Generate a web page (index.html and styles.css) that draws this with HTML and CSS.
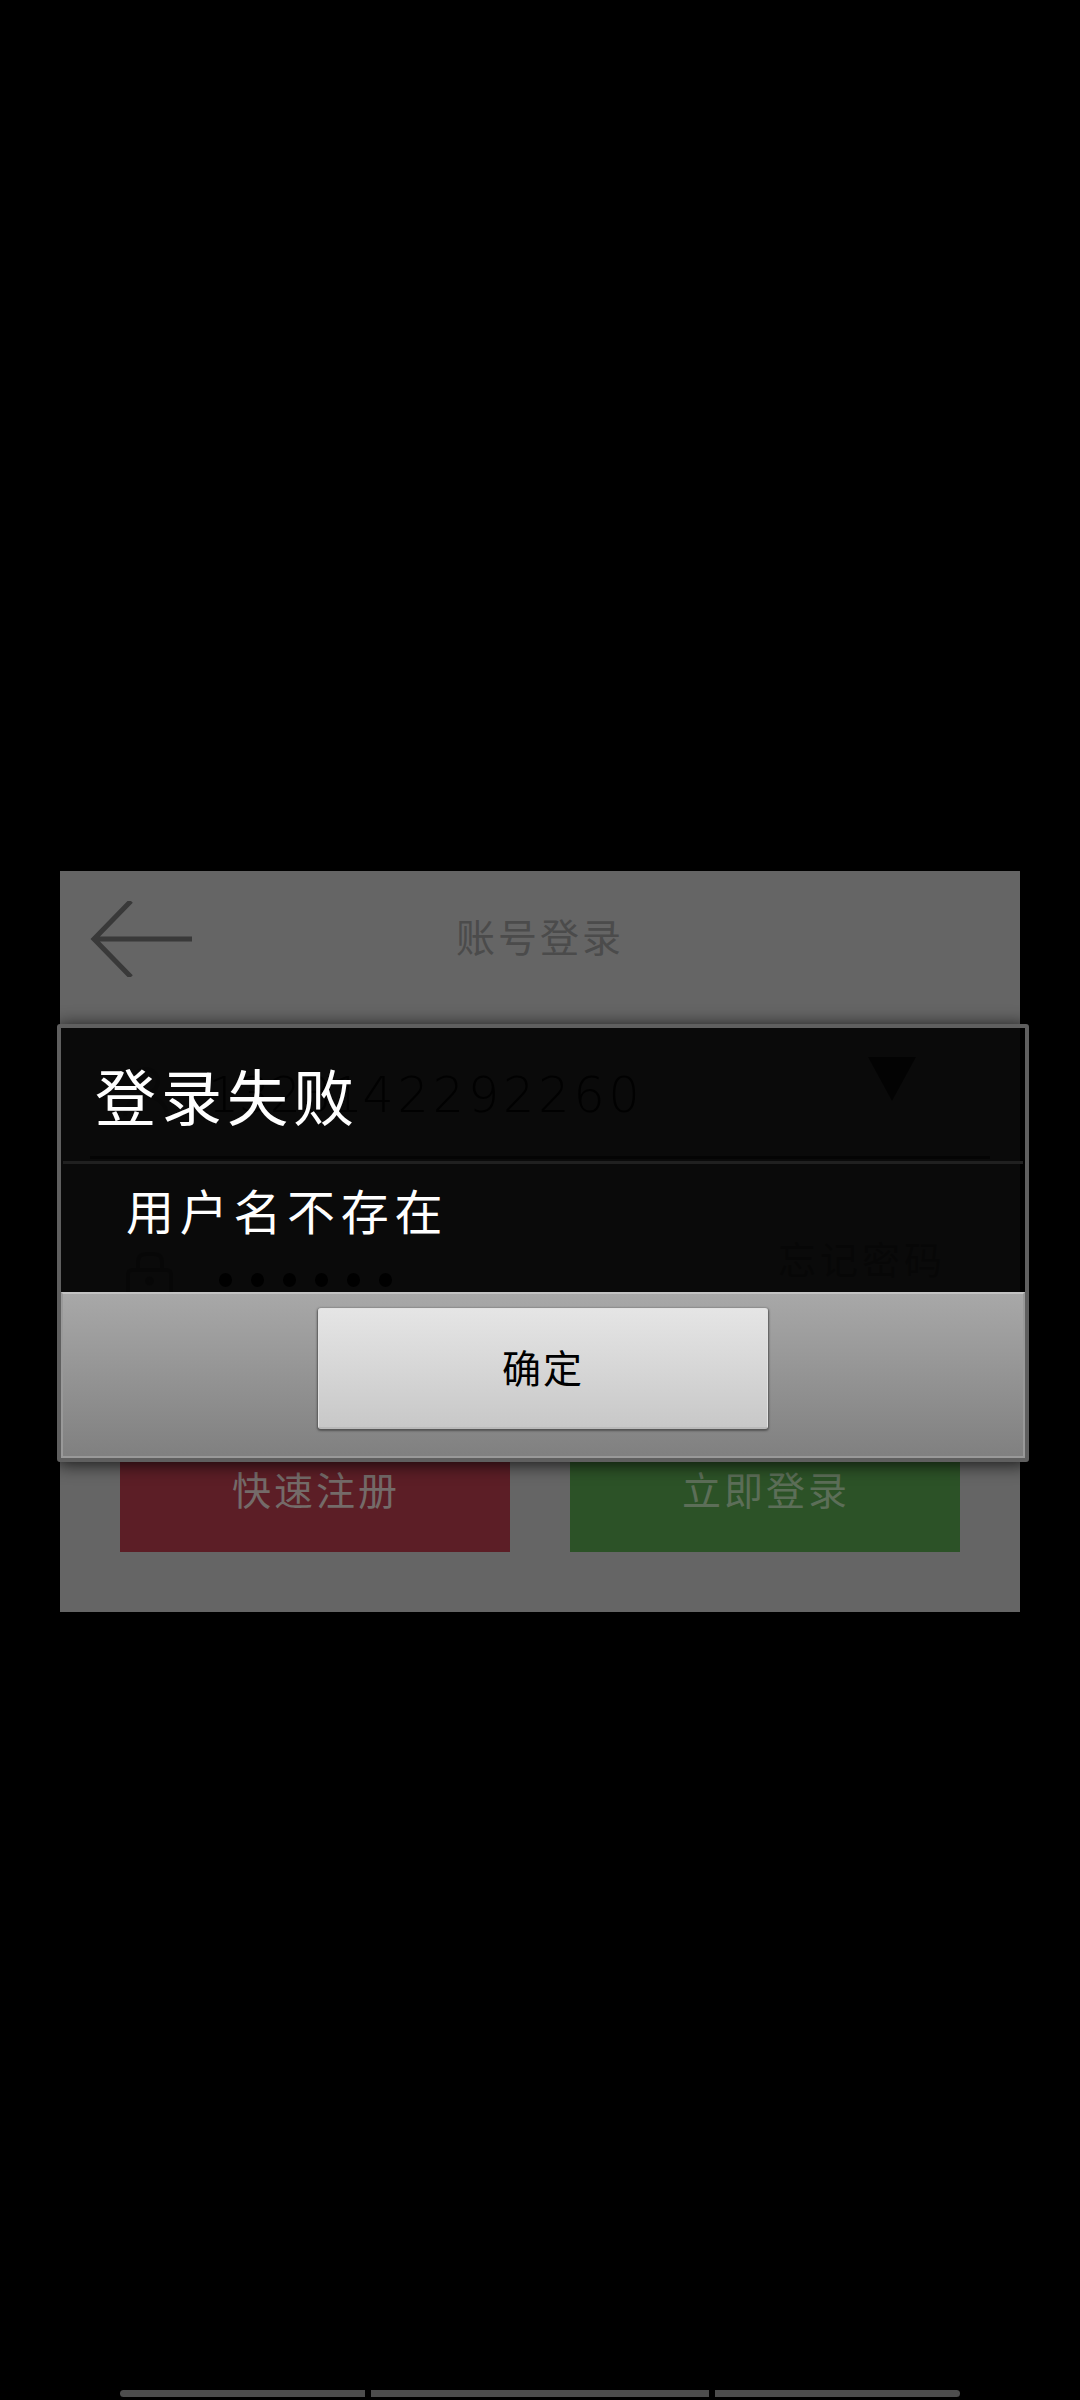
FILE: index.html
```html
<!DOCTYPE html>
<html lang="zh-CN">
<head>
<meta charset="utf-8">
<title>账号登录</title>
<link rel="stylesheet" href="styles.css">
</head>
<body>
<div class="screen">
  <main class="login">
    <header class="login-header">
      <svg class="back" width="104" height="76" viewBox="0 0 104 76" fill="none" stroke="#393939" stroke-width="5">
        <path d="M41 0 4 38 41 76M4 38H102"/>
      </svg>
      <h1 class="login-title">账号登录</h1>
    </header>
    <div class="field account">
      <svg class="field-icon" width="48" height="52" viewBox="0 0 48 52" fill="none" stroke="#505050" stroke-width="4">
        <circle cx="24" cy="15" r="12"/><path d="M3 50C4 24 44 24 45 50"/>
      </svg>
      <span class="number"><span class="number-head">13231</span>42292260</span>
      <svg class="drop" width="48" height="44" viewBox="0 0 48 44"><path d="M0 0H48L24 44Z" fill="#252525"/></svg>
    </div>
    <div class="field password">
      <svg class="field-icon" width="48" height="56" viewBox="0 0 48 56" fill="none" stroke="#4a4a4a" stroke-width="4">
        <rect x="2" y="18" width="43" height="34" rx="4"/><path d="M12 18V10Q12 2 20 2H28Q36 2 36 10V18"/><circle cx="23.500" cy="29" r="2.500"/>
      </svg>
      <span class="dots"><i></i><i></i><i></i><i></i><i></i><i></i></span>
      <span class="forgot">忘记密码</span>
    </div>
    <div class="actions">
      <button class="action register">快速注册</button>
      <button class="action signin">立即登录</button>
    </div>
  </main>
  <nav class="nav-bar"><span></span><span class="wide"></span><span></span></nav>
  <section class="dialog">
    <h2 class="dialog-title">登录失败</h2>
    <p class="dialog-message">用户名不存在</p>
    <footer class="dialog-footer"><button class="confirm">确定</button></footer>
  </section>
</div>
</body>
</html>
```
FILE: styles.css
```css
* { box-sizing: border-box; }
body { margin: 0; background: #000; }
h1, h2, p { margin: 0; font-weight: 400; }
button { border: 0; padding: 0; font-family: inherit; }

.screen {
  position: relative;
  width: 1080px;
  height: 2400px;
  padding: 871px 60px 3px;
  display: flex;
  flex-direction: column;
  justify-content: space-between;
  overflow: hidden;
  background: #000;
  font-family: "Noto Sans CJK SC", sans-serif;
}

.login {
  height: 741px;
  background: #656565;
  display: flex;
  flex-direction: column;
}
.login-header {
  height: 132px;
  padding: 0 30px;
  display: grid;
  grid-template-columns: 104px 1fr 104px;
  align-items: center;
}
.back { margin-top: 3px; }
.login-title {
  padding-bottom: 5px;
  text-align: center;
  font-size: 39px;
  letter-spacing: 3px;
  line-height: 60px;
  color: #4b4b4b;
}
.field {
  margin: 0 30px;
  display: flex;
  align-items: center;
}
.account {
  height: 156px;
  padding: 24px 74px 0 32px;
  border-bottom: 3px solid #303030;
}
.number {
  margin: 9px 0 0 38px;
  font: 200 49px/60px "DejaVu Sans", sans-serif;
  letter-spacing: 4px;
  color: #0c0c0c;
}
.number-head { letter-spacing: -.3px; }
.drop { margin-left: auto; margin-top: -26px; }

.password { height: 212px; padding: 0 44px 0 36px; }
.password .field-icon { margin-top: 30px; }
.dots { display: flex; gap: 19px; margin: 30px 0 0 45px; }
.dots i { width: 13px; height: 14px; border-radius: 50%; background: #000; }
.forgot {
  margin-left: auto;
  margin-top: -15px;
  font-size: 38px;
  line-height: 60px;
  letter-spacing: 4px;
  color: #484848;
}

.actions {
  margin: auto 60px 60px;
  display: grid;
  grid-template-columns: 1fr 1fr;
  gap: 60px;
}
.action {
  height: 121px;
  padding: 0 0 7px 2px;
  font-size: 39px;
  letter-spacing: 3px;
  color: #746b69;
}
.register { background: #5c1e26; }
.signin { background: #2c5227; color: #5c6e58; }

.dialog {
  position: absolute;
  left: 57px;
  top: 1024px;
  width: 972px;
  height: 438px;
  border: 4px solid #5f5f5f;
  border-radius: 3px;
  background: rgba(0, 0, 0, .9);
  background-clip: padding-box;
  box-shadow: 0 2px 18px rgba(0, 0, 0, .8);
  display: flex;
  flex-direction: column;
}
.dialog-title {
  height: 136px;
  margin: 0 2px;
  padding-left: 32px;
  border-bottom: 3px solid #202020;
  font-size: 61px;
  letter-spacing: 5px;
  line-height: 134px;
  color: #fff;
}
.dialog-message {
  flex: 1;
  padding-left: 65px;
  font-size: 48px;
  letter-spacing: 5.7px;
  line-height: 90px;
  color: #fff;
}
.dialog-footer {
  height: 166px;
  padding: 14px 0 0 255px;
  border: 2px solid #999;
  border-top-color: #c3c3c3;
  background: linear-gradient(#a8a8a8, #808080);
}
.confirm {
  width: 450px;
  height: 121px;
  padding-bottom: 4px;
  border: 1px solid #e2e2e2;
  border-bottom: 2px solid #b9b9b9;
  border-radius: 3px;
  background: linear-gradient(#e5e5e5, #c8c8c8);
  box-shadow: 0 1px 2px 1px #555;
  font-size: 39px;
  letter-spacing: 2px;
  color: #000;
}

.nav-bar {
  height: 7px;
  margin: 0 60px;
  display: grid;
  grid-template-columns: 245px 338px 245px;
  gap: 6px;
}
.nav-bar span { background: #4d4d4d; border-radius: 4px 0 0 4px; }
.nav-bar .wide { border-radius: 0; }
.nav-bar span:last-child { border-radius: 0 4px 4px 0; }
```
